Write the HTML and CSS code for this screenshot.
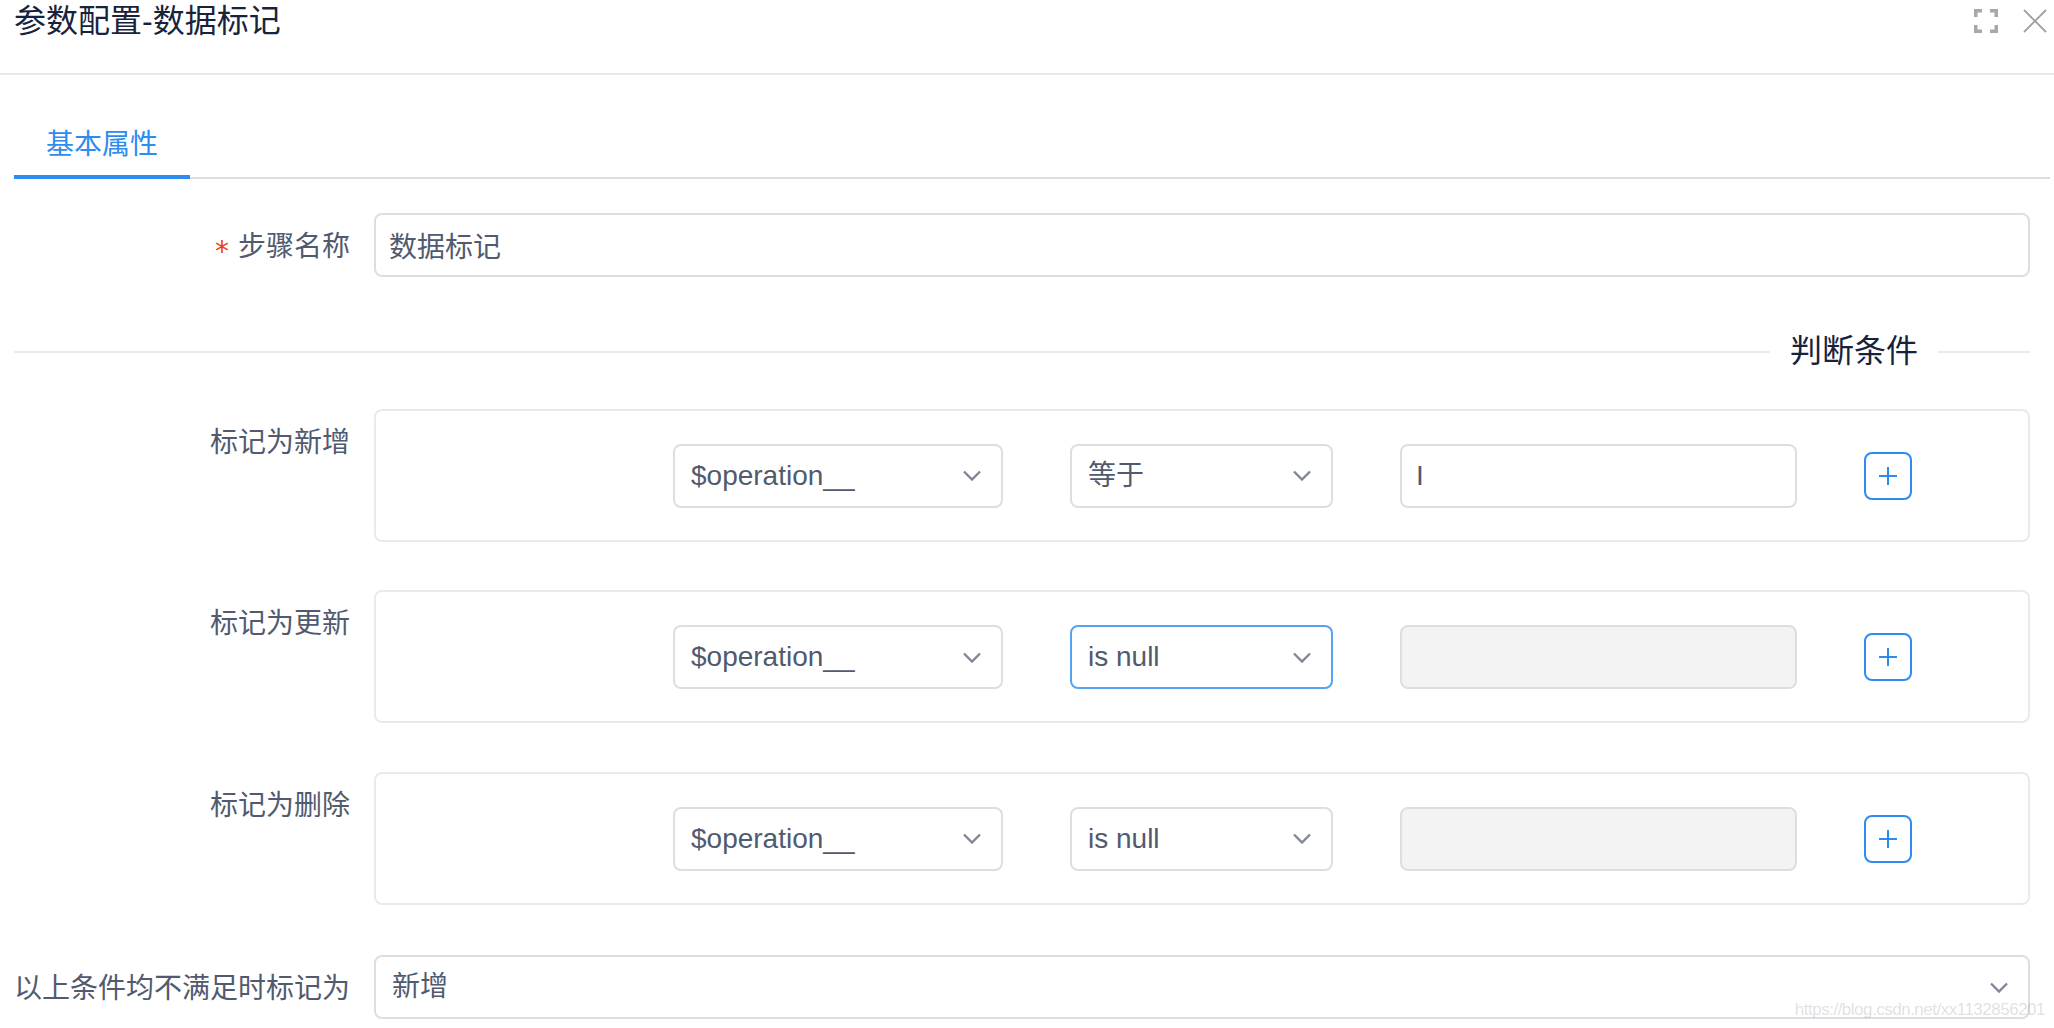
FILE: index.html
```html
<!DOCTYPE html>
<html lang="zh-CN">
<head>
<meta charset="utf-8">
<title>参数配置-数据标记</title>
<link rel="stylesheet" href="styles.css">
</head>
<body>
<div class="modal">
  <header class="modal-header">
    <h1 class="modal-title">参数配置-数据标记</h1>
    <div class="modal-actions">
      <svg class="icon" viewBox="0 0 24 24" aria-hidden="true"><path class="icon-expand" d="M1.750 8V1.750H8M16 1.750H22.250V8M22.250 16V22.250H16M8 22.250H1.750V16"/></svg>
      <svg class="icon" viewBox="0 0 24 24" aria-hidden="true"><path class="icon-close" d="M1 1L23 23M23 1L1 23"/></svg>
    </div>
  </header>

  <nav class="tabs"><span class="tab">基本属性</span></nav>

  <form class="form">
    <div class="field">
      <label class="field-label"><span class="required">*</span>步骤名称</label>
      <input class="control control-full" type="text" value="数据标记">
    </div>

    <div class="divider"><span class="divider-text">判断条件</span></div>

    <div class="rules">
      <div class="field">
        <label class="field-label">标记为新增</label>
        <div class="rule-box">
          <div class="control select"><span>$operation__</span><svg class="chevron" viewBox="0 0 18 11" aria-hidden="true"><path d="M1 1.500L9 9.500L17 1.500"/></svg></div>
          <div class="control select"><span>等于</span><svg class="chevron" viewBox="0 0 18 11" aria-hidden="true"><path d="M1 1.500L9 9.500L17 1.500"/></svg></div>
          <input class="control" type="text" value="I">
          <button class="add-btn" type="button"><svg viewBox="0 0 20 20" aria-hidden="true"><path d="M10 1V19M1 10H19"/></svg></button>
        </div>
      </div>
      <div class="field">
        <label class="field-label">标记为更新</label>
        <div class="rule-box">
          <div class="control select"><span>$operation__</span><svg class="chevron" viewBox="0 0 18 11" aria-hidden="true"><path d="M1 1.500L9 9.500L17 1.500"/></svg></div>
          <div class="control select is-focused"><span>is null</span><svg class="chevron" viewBox="0 0 18 11" aria-hidden="true"><path d="M1 1.500L9 9.500L17 1.500"/></svg></div>
          <input class="control is-disabled" type="text" disabled>
          <button class="add-btn" type="button"><svg viewBox="0 0 20 20" aria-hidden="true"><path d="M10 1V19M1 10H19"/></svg></button>
        </div>
      </div>
      <div class="field">
        <label class="field-label">标记为删除</label>
        <div class="rule-box">
          <div class="control select"><span>$operation__</span><svg class="chevron" viewBox="0 0 18 11" aria-hidden="true"><path d="M1 1.500L9 9.500L17 1.500"/></svg></div>
          <div class="control select"><span>is null</span><svg class="chevron" viewBox="0 0 18 11" aria-hidden="true"><path d="M1 1.500L9 9.500L17 1.500"/></svg></div>
          <input class="control is-disabled" type="text" disabled>
          <button class="add-btn" type="button"><svg viewBox="0 0 20 20" aria-hidden="true"><path d="M10 1V19M1 10H19"/></svg></button>
        </div>
      </div>
    </div>

    <div class="field field-last">
      <label class="field-label">以上条件均不满足时标记为</label>
      <div class="control select control-full"><span>新增</span><svg class="chevron" viewBox="0 0 18 11" aria-hidden="true"><path d="M1 1.500L9 9.500L17 1.500"/></svg></div>
    </div>
  </form>
</div>
<div class="watermark">https://blog.csdn.net/xx1132856201</div>
</body>
</html>
```
FILE: styles.css
```css
* { box-sizing: border-box; }

html, body {
  margin: 0;
  height: 100%;
  overflow: hidden;
  background: #fff;
}

body {
  position: relative;
  font-family: "Liberation Sans", "Noto Sans CJK SC", sans-serif;
  font-size: 28px;
  color: #515a6e;
}

.modal-header {
  display: flex;
  justify-content: space-between;
  height: 75px;
  padding: 1px 7px 0 14px;
  border-bottom: 2px solid #e8eaec;
}

.modal-title {
  margin: 0;
  font-size: 32px;
  font-weight: 400;
  line-height: 40px;
  color: #17233d;
}

.modal-actions {
  display: flex;
  gap: 25px;
  padding-top: 8px;
}

.icon {
  display: block;
  width: 24px;
  height: 24px;
  fill: none;
}

.icon-expand {
  stroke: #a8a8a8;
  stroke-width: 3.500;
}

.icon-close {
  stroke: #a0a0a0;
  stroke-width: 1.800;
}

.tabs {
  display: flex;
  margin: 0 4px 0 14px;
  padding-top: 50px;
  border-bottom: 2px solid #dcdee2;
}

.tab {
  margin-bottom: -2px;
  padding: 0 32px 10px;
  line-height: 40px;
  color: #2d8cf0;
  border-bottom: 4px solid #2d8cf0;
}

.form {
  padding: 34px 24px 0 14px;
}

.field {
  display: flex;
  align-items: flex-start;
}

.field-label {
  flex: 0 0 336px;
  height: 64px;
  margin-right: 24px;
  padding-top: 2px;
  text-align: right;
  line-height: 64px;
  white-space: nowrap;
}

.required {
  margin-right: 9px;
  font-family: "DejaVu Sans", sans-serif;
  vertical-align: -5px;
  line-height: 1;
  color: #ed4014;
}

.control {
  display: block;
  height: 64px;
  min-width: 0;
  padding: 0 14px;
  border: 2px solid #dcdee2;
  border-radius: 8px;
  background: #fff;
  font: inherit;
  color: inherit;
  line-height: 60px;
  outline: none;
}

.control-full {
  flex: 1 1 auto;
  padding-left: 13px;
}

.is-disabled {
  background: #f3f3f3;
}

.select {
  display: flex;
  align-items: center;
  justify-content: space-between;
  padding-left: 16px;
  padding-right: 20px;
}

.is-focused {
  border-color: #57a3f3;
}

.chevron {
  display: block;
  flex: none;
  width: 18px;
  height: 11px;
  fill: none;
  stroke: #808695;
  stroke-width: 2.400;
}

.divider {
  display: flex;
  align-items: center;
  gap: 20px;
  height: 40px;
  margin-top: 55px;
  font-size: 32px;
  line-height: 40px;
  color: #17233d;
}

.divider-text {
  margin-top: -2px;
}

.divider::before,
.divider::after {
  content: "";
  height: 2px;
  background: #e8eaec;
}

.divider::before {
  flex: 1 1 auto;
}

.divider::after {
  flex: 0 0 92px;
}

.rules {
  display: grid;
  row-gap: 48.500px;
  margin-top: 36.500px;
}

.rule-box {
  flex: 1 1 auto;
  display: grid;
  grid-template-columns: 330px 263px 397px 48px;
  column-gap: 67px;
  align-items: center;
  height: 133px;
  padding: 33px 0 32px 297px;
  border: 2px solid #e8eaec;
  border-radius: 8px;
}

.add-btn {
  display: flex;
  align-items: center;
  justify-content: center;
  width: 48px;
  height: 48px;
  padding: 0;
  border: 2px solid #2d8cf0;
  border-radius: 8px;
  background: #fff;
}

.add-btn svg {
  display: block;
  width: 20px;
  height: 20px;
  fill: none;
  stroke: #2d8cf0;
  stroke-width: 2;
}

.field-last {
  margin-top: 50.500px;
}

.watermark {
  position: absolute;
  right: 9px;
  top: 1000px;
  font-size: 17px;
  letter-spacing: -0.500px;
  line-height: 20px;
  color: rgba(150, 150, 150, 0.3);
  white-space: nowrap;
}
```
